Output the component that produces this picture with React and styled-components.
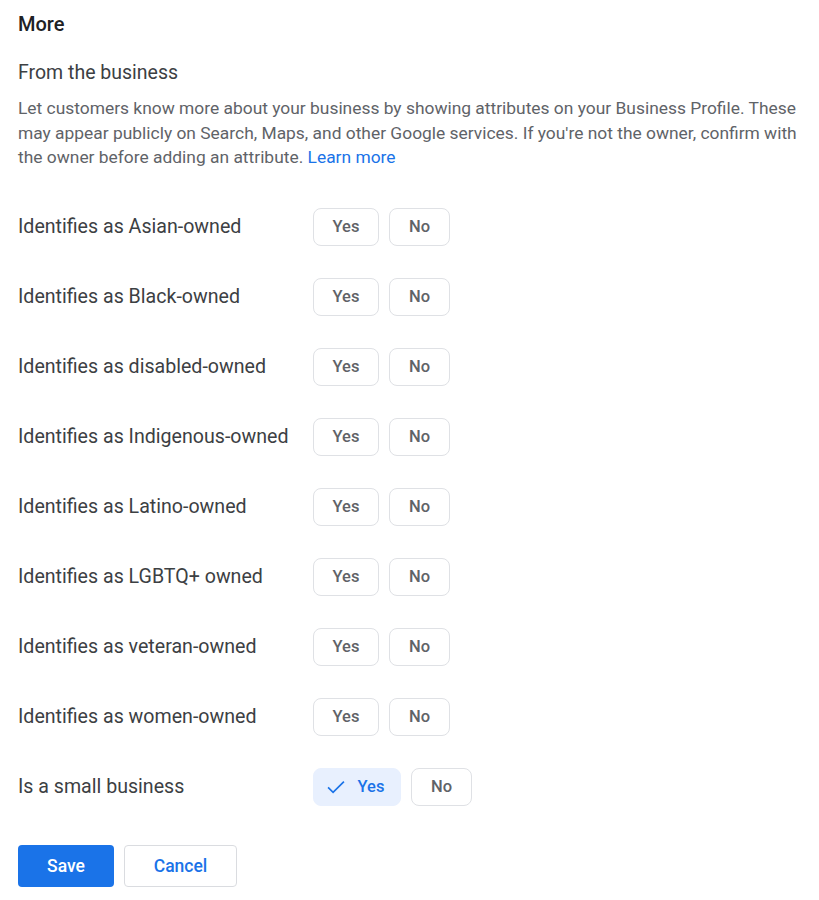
import React, { useState } from "react";
import styled, { createGlobalStyle } from "styled-components";

const Global = createGlobalStyle`
  html, body { margin: 0; padding: 0; background: #fff; }
  body { font-family: Roboto, "Noto Sans", Arial, sans-serif; -webkit-font-smoothing: antialiased; }
  * { box-sizing: border-box; }
`;

const Page = styled.div`
  padding: 10px 18px 0 18px;
  width: 819px;
`;

const Title = styled.h2`
  margin: 0;
  font-size: 20px;
  font-weight: 500;
  color: #202124;
  line-height: 28px;
`;

const Subtitle = styled.h3`
  margin: 21px 0 0;
  font-size: 19.5px;
  font-weight: 400;
  color: #3c4043;
  line-height: 28px;
`;

const Desc = styled.p`
  margin: 9px 0 0;
  font-size: 17.4px;
  line-height: 24.5px;
  color: #5f6368;
  max-width: 795px;
`;

const Link = styled.a`
  color: #1a73e8;
  text-decoration: none;
`;

const List = styled.div`
  margin-top: 38px;
  display: flex;
  flex-direction: column;
  gap: 32px;
`;

const Row = styled.div`
  display: flex;
  align-items: center;
  height: 38px;
`;

const Label = styled.div`
  width: 295px;
  font-size: 19.6px;
  color: #3c4043;
`;

const Choices = styled.div`
  display: flex;
  gap: 10px;
`;

const Chip = styled.button`
  height: 38px;
  width: ${(p) => (p.$selected ? "88px" : p.$wide ? "66px" : "61px")};
  padding: 0;
  display: inline-flex;
  align-items: center;
  justify-content: center;
  gap: 12px;
  border-radius: 8px;
  border: 1px solid ${(p) => (p.$selected ? "#e8f0fe" : "#dfe1e5")};
  background: ${(p) => (p.$selected ? "#e8f0fe" : "#fff")};
  color: ${(p) => (p.$selected ? "#1a73e8" : "#5f6368")};
  font-family: Roboto, Arial, sans-serif;
  font-size: 16.5px;
  font-weight: 500;
  cursor: pointer;
`;

const Actions = styled.div`
  margin-top: 39px;
  display: flex;
  gap: 10px;
`;

const Primary = styled.button`
  height: 42px;
  width: 96px;
  border: none;
  border-radius: 4px;
  background: #1a73e8;
  color: #fff;
  font-family: Roboto, Arial, sans-serif;
  font-size: 17.5px;
  font-weight: 500;
`;

const Secondary = styled.button`
  height: 42px;
  width: 113px;
  border: 1px solid #dadce0;
  border-radius: 4px;
  background: #fff;
  color: #1a73e8;
  font-family: Roboto, Arial, sans-serif;
  font-size: 17.5px;
  font-weight: 500;
`;

const CheckIcon = styled.svg`
  margin-left: -4px;
`;

const Check = () => (
  <CheckIcon width="20" height="20" viewBox="0 0 24 24" fill="none">
    <path d="M2.5 12.5l6 6L21.5 5.5" stroke="#1a73e8" strokeWidth="2" />
  </CheckIcon>
);

const items = [
  "Identifies as Asian-owned",
  "Identifies as Black-owned",
  "Identifies as disabled-owned",
  "Identifies as Indigenous-owned",
  "Identifies as Latino-owned",
  "Identifies as LGBTQ+ owned",
  "Identifies as veteran-owned",
  "Identifies as women-owned",
  "Is a small business",
];

export default function App() {
  const [values] = useState({ "Is a small business": "yes" });
  return (
    <Page>
      <Global />
      <Title>More</Title>
      <Subtitle>From the business</Subtitle>
      <Desc>
        Let customers know more about your business by showing attributes on your Business
        Profile. These may appear publicly on Search, Maps, and other Google services. If you're
        not the owner, confirm with the owner before adding an attribute.{" "}
        <Link href="#">Learn more</Link>
      </Desc>
      <List>
        {items.map((it) => {
          const v = values[it];
          return (
            <Row key={it}>
              <Label>{it}</Label>
              <Choices>
                <Chip $wide $selected={v === "yes"}>
                  {v === "yes" && <Check />}
                  Yes
                </Chip>
                <Chip $selected={v === "no"}>No</Chip>
              </Choices>
            </Row>
          );
        })}
      </List>
      <Actions>
        <Primary>Save</Primary>
        <Secondary>Cancel</Secondary>
      </Actions>
    </Page>
  );
}
